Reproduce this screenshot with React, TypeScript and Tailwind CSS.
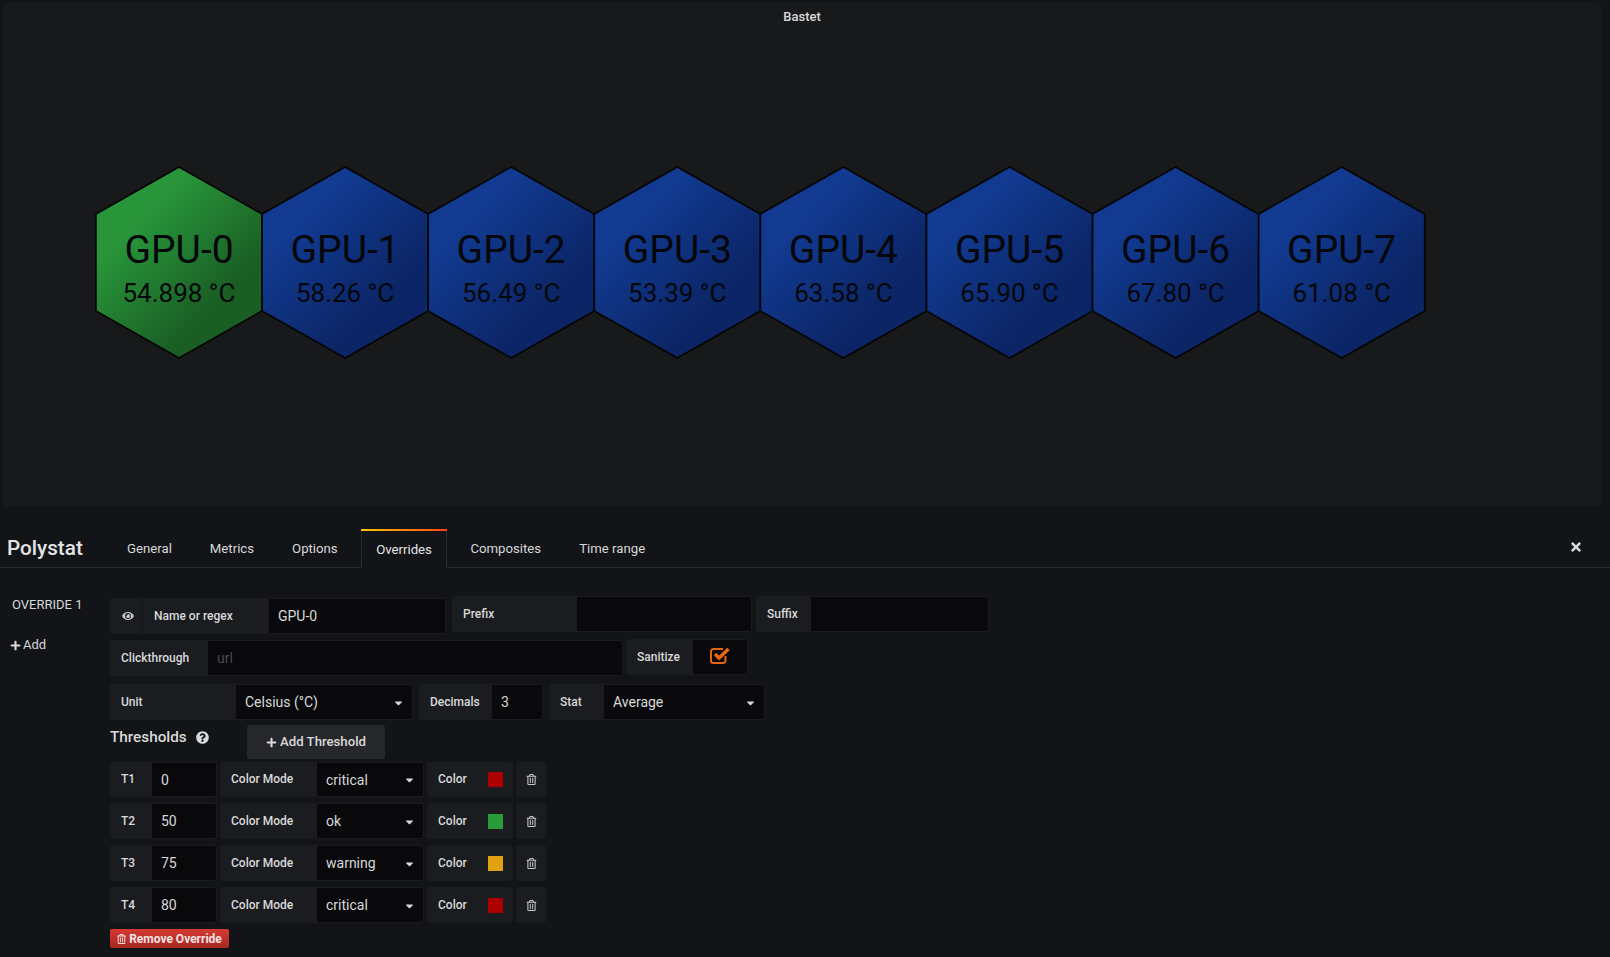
import { FaEye, FaPlus, FaQuestionCircle, FaRegTrashAlt, FaTimes, FaCaretDown } from "react-icons/fa"
import { clsx } from "clsx"

const gpus = [
  { name: "GPU-0", value: "54.898 °C", fill: "url(#green)" },
  { name: "GPU-1", value: "58.26 °C", fill: "url(#blue)" },
  { name: "GPU-2", value: "56.49 °C", fill: "url(#blue)" },
  { name: "GPU-3", value: "53.39 °C", fill: "url(#blue)" },
  { name: "GPU-4", value: "63.58 °C", fill: "url(#blue)" },
  { name: "GPU-5", value: "65.90 °C", fill: "url(#blue)" },
  { name: "GPU-6", value: "67.80 °C", fill: "url(#blue)" },
  { name: "GPU-7", value: "61.08 °C", fill: "url(#blue)" },
]

const thresholds = [
  { id: "T1", value: "0", mode: "critical", swatch: "bg-[#ad0000]", row: "h-[35px]" },
  { id: "T2", value: "50", mode: "ok", swatch: "bg-[#299c39]", row: "h-[36px]" },
  { id: "T3", value: "75", mode: "warning", swatch: "bg-[#e0a010]", row: "h-[36px]" },
  { id: "T4", value: "80", mode: "critical", swatch: "bg-[#ad0000]", row: "h-[36px]" },
]

const tabs = ["General", "Metrics", "Options", "Overrides", "Composites", "Time range"]

function Hexagons() {
  const step = 166.1
  return (
    <svg width="1340" height="196" className="ml-[92px] mt-[138px] block">
      <defs>
        <linearGradient id="green" x1="0.1" y1="0.05" x2="0.85" y2="0.9">
          <stop offset="0.25" stopColor="#28953a" />
          <stop offset="0.8" stopColor="#1a5e24" />
        </linearGradient>
        <linearGradient id="blue" x1="0.1" y1="0.05" x2="0.85" y2="0.9">
          <stop offset="0.25" stopColor="#113a90" />
          <stop offset="0.8" stopColor="#0c2566" />
        </linearGradient>
      </defs>
      {gpus.map((g, i) => {
        const cx = 84 + step * i
        return (
          <g key={g.name}>
            <polygon
              points={`${cx},2 ${cx + 83},49 ${cx + 83},146 ${cx},193 ${cx - 83},146 ${cx - 83},49`}
              fill={g.fill}
              stroke="#050505"
              strokeWidth="1.6"
            />
            <text x={cx} y="98" textAnchor="middle" fontSize="39" fill="#05070a" fontFamily="Roboto, sans-serif">
              {g.name}
            </text>
            <text x={cx} y="137" textAnchor="middle" fontSize="26" fill="#05070a" fontFamily="Roboto, sans-serif">
              {g.value}
            </text>
          </g>
        )
      })}
    </svg>
  )
}

function Label({ className, children }: { className: string; children?: React.ReactNode }) {
  return (
    <div
      className={clsx(
        "flex h-full shrink-0 items-center bg-[#1a1c1f] text-[12px] font-medium text-[#d8d9da] rounded-l-[3px] pl-[11px]",
        className,
      )}
    >
      {children}
    </div>
  )
}

function Field({ className, children }: { className: string; children?: React.ReactNode }) {
  return (
    <div
      className={clsx(
        "flex h-full shrink-0 items-center justify-between bg-[#09090b] border border-[#1b1c1f] rounded-r-[3px] pl-[9px] pr-[9px] pt-[1px] text-[14px] text-[#d8d9da]",
        className,
      )}
    >
      {children}
    </div>
  )
}

function Caret() {
  return <FaCaretDown className="h-[12px] w-[9px] text-[#d8d9da]" />
}

function CheckIcon() {
  return (
    <svg width="21" height="17" viewBox="0 0 21 17" fill="none" className="mt-[-4px]">
      <path
        d="M15.500 9v4.500a2.500 2.500 0 0 1-2.500 2.500H3.500A2.500 2.500 0 0 1 1 13.500V4.500A2.500 2.500 0 0 1 3.500 2H13"
        stroke="#e8650f"
        strokeWidth="2"
      />
      <path d="M5 7 9 11 18.500 2" stroke="#e8650f" strokeWidth="3.600" />
    </svg>
  )
}

export default function App() {
  return (
    <div className="h-[957px] w-[1610px] overflow-hidden bg-[#121417] font-['Roboto',sans-serif] text-[#d8d9da]">
      <div className="ml-[3px] w-[1598px] pt-[3px]">
        <div className="h-[504px] overflow-hidden rounded-[3px] bg-[#18191b]">
          <div className="h-[24px] pt-[6px] text-center text-[13px] font-medium leading-[15px] text-[#d8d9da]">Bastet</div>
          <Hexagons />
        </div>
      </div>

      <div className="flex h-[61px] items-end border-b border-[#292a2d]">
        <div className="flex h-[38px] w-[112px] shrink-0 items-center pl-[7px] text-[20.700px] font-medium leading-none text-[#e3e4e5]">
          Polystat
        </div>
        <div className="flex h-[38px] items-stretch text-[13.200px]">
          {tabs.map((t) =>
            t === "Overrides" ? (
              <div key={t} className="relative mr-[8px] mb-[-1px] flex items-center border-x border-[#292a2d] bg-[#121417] pt-[2px] px-[14.500px] text-[#e3e4e5]">
                <div className="absolute left-[-1px] right-[-1px] top-0 h-[2px] bg-gradient-to-r from-[#ffc000] to-[#ff3a10]" />
                {t}
              </div>
            ) : (
              <div key={t} className="mr-[8px] flex items-center pt-[1px] px-[15px] text-[#d8d9da]">
                {t}
              </div>
            ),
          )}
        </div>
        <div className="mb-[13px] ml-auto mr-[27px]">
          <FaTimes className="h-[14px] w-[14px] text-[#d8d9da]" />
        </div>
      </div>

      <div className="flex">
        <div className="w-[110px] shrink-0 pt-[28px]">
          <div className="pl-[12px] text-[13px] leading-[18px] text-[#d8d9da]">OVERRIDE 1</div>
          <div className="mt-[22px] flex items-center gap-[2px] pl-[10px] text-[13px] leading-[18px] text-[#d8d9da]">
            <FaPlus className="h-[11px] w-[11px]" />
            Add
          </div>
        </div>

        <div className="w-[900px] pt-[28px]">
          <div className="flex h-[38px] items-start">
            <div className="mt-[2px] flex h-[36px]">
              <div className="mr-[1px] flex h-full w-[32px] items-center justify-center rounded-l-[3px] bg-[#1a1c1f] pl-[3px]">
                <FaEye className="h-[12px] w-[12px] text-[#c8c9ca]" />
              </div>
              <Label className="w-[125px] rounded-l-none">Name or regex</Label>
              <Field className="w-[178px]">GPU-0</Field>
            </div>
            <div className="ml-[6px] flex h-[36px]">
              <Label className="w-[124px]">Prefix</Label>
              <Field className="w-[176px]" />
            </div>
            <div className="ml-[4px] flex h-[36px]">
              <Label className="w-[54px]">Suffix</Label>
              <Field className="w-[179px]" />
            </div>
          </div>

          <div className="mt-[5px] flex h-[37px] items-start">
            <div className="mt-[1px] flex h-[36px]">
              <Label className="w-[97px]">Clickthrough</Label>
              <Field className="w-[416px]">
                <span className="text-[#4a4b4e]">url</span>
              </Field>
            </div>
            <div className="ml-[3px] flex h-[36px]">
              <Label className="w-[66px]">Sanitize</Label>
              <Field className="w-[56px] justify-center pl-[4px] pr-0">
                <CheckIcon />
              </Field>
            </div>
          </div>

          <div className="mt-[8px] flex h-[36px]">
            <Label className="w-[125px]">Unit</Label>
            <Field className="w-[178px]">
              Celsius (°C)
              <Caret />
            </Field>
            <Label className="ml-[6px] w-[72px]">Decimals</Label>
            <Field className="w-[52px]">3</Field>
            <Label className="ml-[6px] w-[54px]">Stat</Label>
            <Field className="w-[162px]">
              Average
              <Caret />
            </Field>
          </div>

          <div className="mt-[5px] flex h-[34px] items-start">
            <div className="flex h-[24px] w-[137px] items-center text-[15.300px] font-medium text-[#d8d9da]">
              Thresholds
              <FaQuestionCircle className="ml-[9px] h-[13px] w-[13px]" />
            </div>
            <div className="flex h-[34px] w-[138px] items-center justify-center gap-[3px] rounded-[3px] bg-[#26272a] text-[13.200px] font-medium text-[#d8d9da]">
              <FaPlus className="h-[11px] w-[11px]" />
              Add Threshold
            </div>
          </div>

          <div className="mt-[3px] flex flex-col gap-[6px]">
            {thresholds.map((t) => (
              <div key={t.id} className={clsx("flex", t.row)}>
                <Label className="w-[41px] pb-[1px]">{t.id}</Label>
                <Field className="w-[66px]">{t.value}</Field>
                <Label className="ml-[3px] w-[96px] pb-[1px]">Color Mode</Label>
                <Field className="w-[108px]">
                  {t.mode}
                  <Caret />
                </Field>
                <Label className="ml-[3px] w-[51px] pb-[1px]">Color</Label>
                <div className="flex h-full w-[35px] items-center justify-center rounded-r-[3px] bg-[#1a1c1f]">
                  <div className={clsx("h-[15px] w-[15px]", t.swatch)} />
                </div>
                <div className="ml-[3px] flex h-full w-[30px] items-center justify-center rounded-[3px] bg-[#1a1c1f]">
                  <FaRegTrashAlt className="h-[11px] w-[11px] text-[#c8c9ca]" />
                </div>
              </div>
            ))}
          </div>

          <div className="mt-[6px] flex h-[19px] w-[119px] items-center justify-center gap-[3px] rounded-[2px] bg-gradient-to-b from-[#d43a32] to-[#a82722] text-[12px] font-bold text-[#f3e3e3]">
            <FaRegTrashAlt className="h-[10px] w-[9px]" />
            Remove Override
          </div>
        </div>
      </div>
    </div>
  )
}
